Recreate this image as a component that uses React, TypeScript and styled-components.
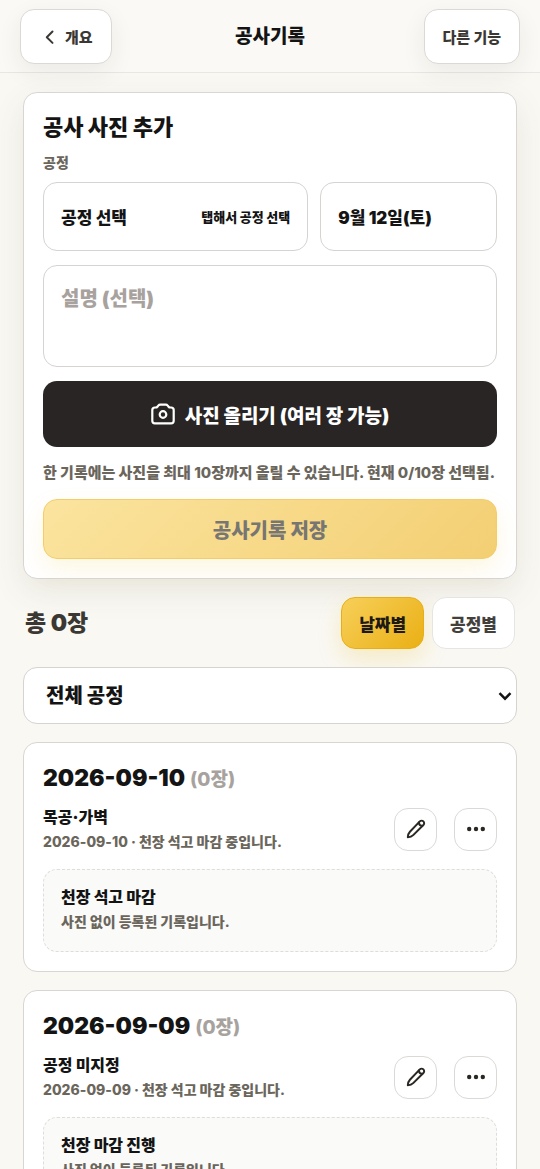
import React from "react";
import styled, { createGlobalStyle, css } from "styled-components";

const GlobalStyle = createGlobalStyle`
  *, *::before, *::after { box-sizing: border-box; }
  body {
    margin: 0;
    background: #f9f8f3;
    color: #141414;
    font-family: Inter, "Noto Sans CJK KR", sans-serif;
    font-weight: 900;
    -webkit-font-smoothing: antialiased;
  }
  button, input, select, textarea { font: inherit; color: inherit; margin: 0; }
  button { cursor: pointer; }
  h1, h2, h3, p { margin: 0; font-weight: inherit; }
`;

const Header = styled.header`
  position: sticky;
  top: 0;
  z-index: 2;
  display: grid;
  grid-template-columns: 1fr auto 1fr;
  align-items: center;
  padding: 9px 20px 8px;
  background: #faf9f5;
  border-bottom: 1px solid #e9e7e4;
`;

const HeaderButton = styled.button<{ $end?: boolean }>`
  display: flex;
  align-items: center;
  gap: 6px;
  justify-self: ${(p) => (p.$end ? "end" : "start")};
  height: 55px;
  padding: 0 18px;
  border: 1px solid #dcd8d6;
  border-radius: 14px;
  background: #fff;
  color: #3b3833;
  font-size: 15px;
  font-weight: 800;
  box-shadow: 0 8px 24px rgba(40, 36, 30, 0.07);
`;

const PageTitle = styled.h1`
  font-size: 19px;
  line-height: 28px;
`;

const Main = styled.main`
  display: flex;
  flex-direction: column;
  gap: 18px;
  padding: 19px 23px 32px;
`;

const Card = styled.section<{ $raised?: boolean }>`
  padding: 19px;
  border: 1px solid #d9d5d3;
  border-radius: 14px;
  background: #fff;
  ${(p) =>
    p.$raised &&
    css`
      box-shadow: 0 12px 32px rgba(90, 80, 40, 0.1);
    `}
`;

const Form = styled.form`
  display: flex;
  flex-direction: column;
  gap: 14px;
`;

const FormTitle = styled.h2`
  font-size: 22px;
  line-height: 30px;
`;

const Field = styled.div`
  display: flex;
  flex-direction: column;
  gap: 9px;
`;

const FieldLabel = styled.label`
  color: #6b665c;
  font-size: 14px;
  font-weight: 800;
  line-height: 20px;
`;

const FormHead = styled.div`
  display: flex;
  flex-direction: column;
  gap: 11px;
`;

const FieldRow = styled.div`
  display: grid;
  grid-template-columns: 3fr 2fr;
  gap: 12px;
`;

const PickerButton = styled.button`
  display: flex;
  align-items: center;
  justify-content: space-between;
  height: 69px;
  padding: 0 17px;
  border: 1px solid #d6d3d1;
  border-radius: 14px;
  background: #fff;
  font-size: 17px;
  text-align: left;
`;

const PickerHint = styled.span`
  font-size: 13px;
`;

const Description = styled.textarea`
  display: block;
  width: 100%;
  height: 102px;
  padding: 17px;
  border: 1px solid #d6d3d1;
  border-radius: 14px;
  background: #fff;
  font-size: 20px;
  line-height: 32px;
  resize: none;

  &::placeholder {
    color: #a8a29e;
    opacity: 1;
  }
`;

const UploadButton = styled.button`
  display: flex;
  align-items: center;
  justify-content: center;
  gap: 10px;
  height: 66px;
  border: 0;
  border-radius: 14px;
  background: #292524;
  color: #fff;
  font-size: 19px;
`;

const Hint = styled.p`
  color: #6b665c;
  font-size: 15px;
  font-weight: 800;
  line-height: 24px;
`;

const SaveButton = styled.button`
  height: 60px;
  border: 1px solid #f4cd68;
  border-radius: 14px;
  background: linear-gradient(135deg, #fbe49f, #f3cf73);
  color: #777672;
  font-size: 20px;
  box-shadow: 0 10px 24px rgba(234, 179, 8, 0.12);
`;

const ListHead = styled.div`
  display: flex;
  align-items: center;
  justify-content: space-between;
  padding: 0 2px;
`;

const Total = styled.h2`
  color: #3b3833;
  font-size: 23px;
  line-height: 32px;
`;

const Toggle = styled.div`
  display: flex;
  gap: 8px;
`;

const ToggleButton = styled.button<{ $active?: boolean }>`
  height: 52px;
  padding: 0 17px;
  border: 1px solid ${(p) => (p.$active ? "#e9ae14" : "#e7e5e4")};
  border-radius: 14px;
  background: ${(p) => (p.$active ? "linear-gradient(135deg, #f7cf59, #eab015)" : "#fff")};
  color: ${(p) => (p.$active ? "#1c1917" : "#44403c")};
  font-size: 17px;
  ${(p) =>
    p.$active &&
    css`
      box-shadow: 0 10px 24px rgba(234, 179, 8, 0.2);
    `}
`;

const SelectBox = styled.div`
  display: grid;
  align-items: center;

  > * {
    grid-area: 1 / 1;
  }

  > svg {
    justify-self: end;
    margin-right: 5px;
    pointer-events: none;
  }
`;

const Select = styled.select`
  appearance: none;
  width: 100%;
  height: 57px;
  padding: 0 22px;
  border: 1px solid #d6d3d1;
  border-radius: 14px;
  background: #fff;
  font-size: 20px;
`;

const RecordDate = styled.h2`
  display: flex;
  align-items: baseline;
  gap: 5px;
  font-size: 23px;
  line-height: 32px;
`;

const Count = styled.span`
  color: #a8a29e;
  font-size: 19px;
  font-weight: 800;
  line-height: 24px;
`;

const RecordRow = styled.div`
  display: flex;
  align-items: center;
  justify-content: space-between;
  margin: 10px 0 15px;
`;

const RecordName = styled.h3`
  font-size: 16px;
  line-height: 26px;
`;

const RecordMeta = styled.p`
  color: #6b665c;
  font-size: 14px;
  font-weight: 800;
  line-height: 24px;
`;

const Actions = styled.div`
  display: flex;
  gap: 17px;
`;

const IconButton = styled.button`
  display: grid;
  place-items: center;
  width: 43px;
  height: 43px;
  padding: 0;
  border: 1px solid #dcd8d6;
  border-radius: 14px;
  background: #fff;
  color: #2b2823;
`;

const Note = styled.div`
  padding: 14px 17px 17px;
  border: 1px dashed #dfdddb;
  border-radius: 14px;
  background: #fafaf9;
`;

const BackIcon = () => (
  <svg width="20" height="20" viewBox="0 0 20 20" fill="none" stroke="currentColor" strokeWidth="2" strokeLinecap="round" strokeLinejoin="round" aria-hidden="true">
    <path d="M13.500 4.500 7.800 10.200l5.700 5.700" />
  </svg>
);

const CameraIcon = () => (
  <svg width="24" height="24" viewBox="0 0 24 24" fill="none" stroke="currentColor" strokeWidth="2.200" strokeLinecap="round" strokeLinejoin="round" aria-hidden="true">
    <path d="M9.200 2.700h5.600c.8 0 1.400.3 1.900.9l.9 1.100c.4.500 1 .8 1.700.8h.8c1.500 0 2.600 1.100 2.600 2.600v10.600c0 1.500-1.100 2.600-2.600 2.600H3.900c-1.500 0-2.600-1.100-2.600-2.600V8.100c0-1.500 1.100-2.600 2.600-2.600h.8c.7 0 1.300-.3 1.700-.8l.9-1.100c.5-.6 1.100-.9 1.900-.9Z" />
    <circle cx="12" cy="12.500" r="3.300" />
  </svg>
);

const PencilIcon = () => (
  <svg width="22" height="22" viewBox="0 0 22 22" fill="none" stroke="currentColor" strokeWidth="2" strokeLinecap="round" strokeLinejoin="round" aria-hidden="true">
    <path d="M14.800 3.400c1-1 2.600-1 3.600 0s1 2.600 0 3.600L8.200 17.100c-1 1-3.300 2-5.400 2.100.1-2.100 1-4.300 2.100-5.500Z" />
    <path d="M13.800 4.600c.2 1.900 1.500 3.200 3.400 3.400" />
  </svg>
);

const MoreIcon = () => (
  <svg width="20" height="20" viewBox="0 0 20 20" fill="currentColor" aria-hidden="true">
    <circle cx="3.200" cy="10" r="2.200" />
    <circle cx="10" cy="10" r="2.200" />
    <circle cx="16.800" cy="10" r="2.200" />
  </svg>
);

const ChevronIcon = () => (
  <svg width="14" height="14" viewBox="0 0 14 14" fill="none" stroke="currentColor" strokeWidth="2.400" aria-hidden="true">
    <path d="m1.500 4.200 5.500 5.500 5.500-5.500" />
  </svg>
);

const records = [
  { date: "2026-09-10", name: "목공·가벽", note: "천장 석고 마감" },
  { date: "2026-09-09", name: "공정 미지정", note: "천장 마감 진행" },
];

export default function App() {
  return (
    <>
      <GlobalStyle />
      <Header>
        <HeaderButton type="button">
          <BackIcon />
          개요
        </HeaderButton>
        <PageTitle>공사기록</PageTitle>
        <HeaderButton type="button" $end>
          다른 기능
        </HeaderButton>
      </Header>
      <Main>
        <Card $raised>
          <Form>
            <FormHead>
              <FormTitle>공사 사진 추가</FormTitle>
              <Field>
                <FieldLabel htmlFor="process">공정</FieldLabel>
                <FieldRow>
                  <PickerButton type="button" id="process">
                    공정 선택
                    <PickerHint>탭해서 공정 선택</PickerHint>
                  </PickerButton>
                  <PickerButton type="button">9월 12일(토)</PickerButton>
                </FieldRow>
              </Field>
            </FormHead>
            <Description aria-label="설명" placeholder="설명 (선택)" />
            <UploadButton type="button">
              <CameraIcon />
              사진 올리기 (여러 장 가능)
            </UploadButton>
            <Hint>한 기록에는 사진을 최대 10장까지 올릴 수 있습니다. 현재 0/10장 선택됨.</Hint>
            <SaveButton type="submit" disabled>
              공사기록 저장
            </SaveButton>
          </Form>
        </Card>
        <ListHead>
          <Total>총 0장</Total>
          <Toggle>
            <ToggleButton type="button" aria-pressed="true" $active>
              날짜별
            </ToggleButton>
            <ToggleButton type="button" aria-pressed="false">
              공정별
            </ToggleButton>
          </Toggle>
        </ListHead>
        <SelectBox>
          <Select aria-label="공정">
            <option>전체 공정</option>
          </Select>
          <ChevronIcon />
        </SelectBox>
        {records.map((r) => (
          <Card key={r.date}>
            <RecordDate>
              {r.date} <Count>(0장)</Count>
            </RecordDate>
            <RecordRow>
              <div>
                <RecordName>{r.name}</RecordName>
                <RecordMeta>{r.date} · 천장 석고 마감 중입니다.</RecordMeta>
              </div>
              <Actions>
                <IconButton type="button" aria-label="수정">
                  <PencilIcon />
                </IconButton>
                <IconButton type="button" aria-label="더보기">
                  <MoreIcon />
                </IconButton>
              </Actions>
            </RecordRow>
            <Note>
              <RecordName>{r.note}</RecordName>
              <RecordMeta>사진 없이 등록된 기록입니다.</RecordMeta>
            </Note>
          </Card>
        ))}
      </Main>
    </>
  );
}
